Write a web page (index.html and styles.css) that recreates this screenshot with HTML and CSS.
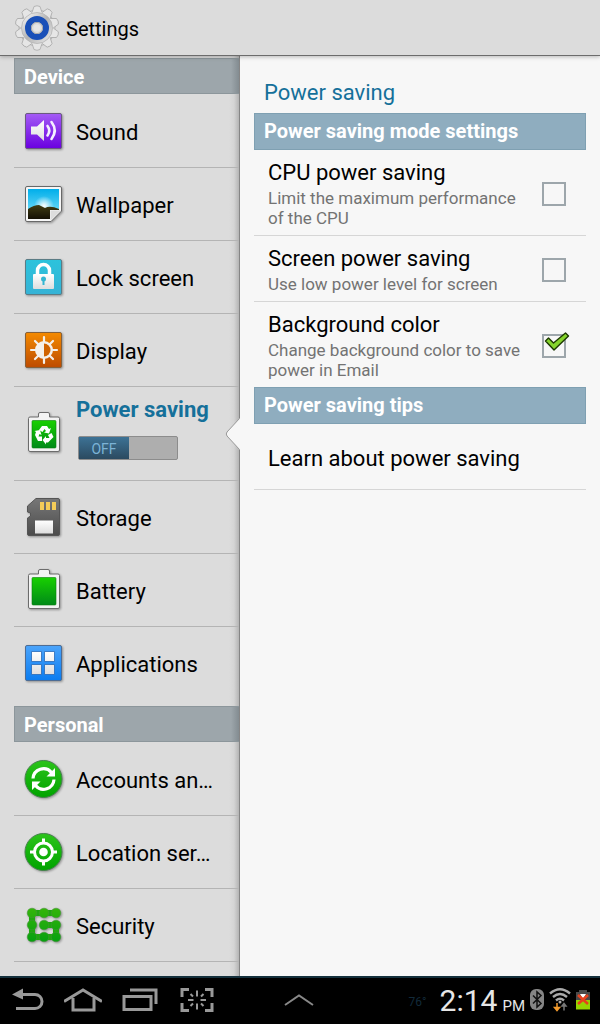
FILE: index.html
```
<!DOCTYPE html>
<html lang="en">

<head>
  <meta charset="UTF-8" />
  <meta name="viewport" content="width=device-width, initial-scale=1.0" />
  <title>Settings</title>
  <link rel="stylesheet" href="styles.css">
</head>

<body>

  <!-- shared gradients -->
  <svg class="defs" width="0" height="0" aria-hidden="true">
    <defs>
      <linearGradient id="purple" x2="0" y2="1"><stop stop-color="#a45cf5" /><stop offset="1" stop-color="#6a00e0" /></linearGradient>
      <linearGradient id="sky" x2="0" y2="1"><stop stop-color="#00aeea" /><stop offset="1" stop-color="#8be6fb" /></linearGradient>
      <linearGradient id="hill" x2="0" y2="1"><stop stop-color="#403c12" /><stop offset="1" stop-color="#151004" /></linearGradient>
      <linearGradient id="cyan" x2="0" y2="1"><stop stop-color="#2cc3dc" /><stop offset="1" stop-color="#36b3d6" /></linearGradient>
      <linearGradient id="orange" x2="0" y2="1"><stop stop-color="#f48a00" /><stop offset="1" stop-color="#bd4b00" /></linearGradient>
      <linearGradient id="blue" x2="0" y2="1"><stop stop-color="#4ba4fb" /><stop offset="1" stop-color="#0a7cf0" /></linearGradient>
      <linearGradient id="green" x2="0" y2="1"><stop stop-color="#18d000" /><stop offset="1" stop-color="#008a18" /></linearGradient>
      <linearGradient id="ball" x2="0" y2="1"><stop stop-color="#2cc41a" /><stop offset="1" stop-color="#00a300" /></linearGradient>
      <linearGradient id="dots" gradientUnits="userSpaceOnUse" x1="0" y1="3" x2="0" y2="37"><stop stop-color="#35b50a" /><stop offset="1" stop-color="#06a010" /></linearGradient>
      <linearGradient id="white" x2="0" y2="1"><stop stop-color="#fff" /><stop offset="1" stop-color="#dedede" /></linearGradient>
      <linearGradient id="card" x2="0" y2="1"><stop stop-color="#777" /><stop offset="1" stop-color="#4c4c4c" /></linearGradient>
      <linearGradient id="steel" x2="1" y2="1"><stop stop-color="#fff" /><stop offset="0.5" stop-color="#b4b4b4" /><stop offset="1" stop-color="#eee" /></linearGradient>
      <radialGradient id="sun"><stop stop-color="#fff" /><stop offset="1" stop-color="#fff" stop-opacity="0" /></radialGradient>
    </defs>
  </svg>

  <header class="title-bar">
    <svg class="gear" viewBox="0 0 46 48" aria-hidden="true">
      <g fill="#e6e6e6" stroke="#aaa" stroke-width="0.8">
        <circle cx="23" cy="24" r="18" />
        <path id="tooth" d="M18 8.500L20 2.500Q23 1 26 2.500L28 8.500" />
        <use href="#tooth" transform="rotate(36 23 24)" />
        <use href="#tooth" transform="rotate(72 23 24)" />
        <use href="#tooth" transform="rotate(108 23 24)" />
        <use href="#tooth" transform="rotate(144 23 24)" />
        <use href="#tooth" transform="rotate(180 23 24)" />
        <use href="#tooth" transform="rotate(216 23 24)" />
        <use href="#tooth" transform="rotate(252 23 24)" />
        <use href="#tooth" transform="rotate(288 23 24)" />
        <use href="#tooth" transform="rotate(324 23 24)" />
      </g>
      <circle cx="23" cy="24" r="15.500" fill="url(#steel)" stroke="#b4b4b4" stroke-width="0.8" />
      <circle cx="23" cy="24" r="9" fill="#e6e6e6" stroke="#1a50b8" stroke-width="6" />
      <circle cx="23" cy="24" r="5.600" fill="#dcdcdc" stroke="#a8a8a8" />
      <circle cx="23" cy="24" r="3.500" fill="#e6e6e6" />
    </svg>
    <h1 class="app-title">Settings</h1>
  </header>

  <div class="panes">
    <nav class="sidebar" aria-label="Settings">
      <h2 class="group">Device</h2>
      <ul class="menu">
        <li>
          <a class="item" href="#sound">
            <svg class="icon" viewBox="0 0 40 40" aria-hidden="true">
              <rect x="1.5" y="2.5" width="36" height="35" rx="1.5" fill="url(#purple)" stroke="#6b5a80" />
              <path d="M7 15.500h6l7-6.500v21l-7-6.500H7z" fill="url(#white)" />
              <path d="M23.500 15q3.500 4.500 0 9.500M27.500 11q6.500 8.500 0 17" fill="none" stroke="#f4efff" stroke-width="2.600" stroke-linecap="round" />
            </svg>
            <span class="label">Sound</span>
          </a>
        </li>
        <li>
          <a class="item" href="#wallpaper">
            <svg class="icon" viewBox="0 0 40 40" aria-hidden="true">
              <path d="M3 2.500h33q1.500 0 1.500 1.500v23L27 37.500H3q-1.500 0-1.500-1.500V4q0-1.500 1.500-1.500z" fill="#f6f6f6" stroke="#686868" />
              <path d="M4 5h31v21h-9v9H4z" fill="url(#sky)" />
              <circle cx="20" cy="22" r="10" fill="url(#sun)" />
              <path d="M4 25q6-4 11-4l6 3q5-3 14 1v1h-9v9H4z" fill="url(#hill)" />
              <path d="M26.500 36.500V26.500H37z" fill="#ddd" />
            </svg>
            <span class="label">Wallpaper</span>
          </a>
        </li>
        <li>
          <a class="item" href="#lock">
            <svg class="icon" viewBox="0 0 40 40" aria-hidden="true">
              <rect x="1.5" y="2.5" width="36" height="35" rx="1.5" fill="url(#cyan)" stroke="#5b7c85" />
              <path d="M13.500 18v-4.500a6 6 0 0 1 12 0V18" fill="none" stroke="#fff" stroke-width="3.500" />
              <rect x="9" y="17" width="21" height="15" rx="1" fill="url(#white)" />
              <circle cx="19.5" cy="22" r="2.5" fill="#35b6d2" />
              <path d="M18.500 22h2v6h-2z" fill="#35b6d2" />
            </svg>
            <span class="label">Lock screen</span>
          </a>
        </li>
        <li>
          <a class="item" href="#display">
            <svg class="icon" viewBox="0 0 40 40" aria-hidden="true">
              <rect x="1.5" y="2.5" width="36" height="35" rx="1.5" fill="url(#orange)" stroke="#85603a" />
              <path d="M20 7v26M7 20h26M11 11l18 18M29 11L11 29" stroke="#f4f0ea" stroke-width="2.200" stroke-linecap="round" />
              <circle cx="20" cy="20" r="9" fill="#f4f0ea" />
              <path d="M20 13.500a6.500 6.500 0 0 1 0 13z" fill="#d06300" />
            </svg>
            <span class="label">Display</span>
          </a>
        </li>
        <li class="item selected">
          <svg class="icon" viewBox="0 0 40 40" aria-hidden="true">
            <path d="M14.500 4V1q0-1.500 1.500-1.500h8q1.500 0 1.500 1.500v3H34q1.500 0 1.500 1.500V37q0 1.500-1.500 1.500H6q-1.500 0-1.500-1.500V5.500Q4.500 4 6 4z" fill="#f3f3f3" stroke="#6c6c6c" />
            <rect x="8" y="7.5" width="24" height="27.500" rx="1" fill="url(#green)" stroke="#08800c" stroke-width="0.600" />
            <g fill="#fff">
              <path d="M15 17l3-4h5l2 3 2-1-2 5.500-5-1 2-1.500-1.500-2-2 3z" />
              <path d="M11 22l1-3-1.500-1 5.500-1 1.500 5-2-1-1 2.500H18v4.500h-4z" />
              <path d="M24 29.500h-2v2L18.500 27l3.500-4v2h3.500L24 22l3.500-2 2 4z" />
            </g>
          </svg>
          <div class="switch-row">
            <a class="label" href="#power" aria-current="page">Power saving</a>
            <button class="switch" role="switch" aria-checked="false" aria-label="Power saving mode"><span class="thumb">OFF</span></button>
          </div>
          <svg class="notch" viewBox="0 0 15 32" aria-hidden="true">
            <path d="M15 0L2 14Q0.500 16 2 18L15 32z" fill="#f7f7f7" />
            <path d="M14.500 0.500L2 14Q0.500 16 2 18L14.500 31.500" fill="none" stroke="#999" />
          </svg>
        </li>
        <li>
          <a class="item" href="#storage">
            <svg class="icon" viewBox="0 0 40 40" aria-hidden="true">
              <path d="M12 1.500h22q1.500 0 1.500 1.500v34q0 1.500-1.500 1.500H5q-1.500 0-1.500-1.500V21l3-2v-3l-3-1v-6z" fill="url(#card)" stroke="#555" />
              <path d="M16 5h4v8h-4zM22 5h4v8h-4zM28 5h4v8h-4z" fill="#f5cc58" />
              <rect x="11" y="23.500" width="18" height="13" fill="url(#white)" />
            </svg>
            <span class="label">Storage</span>
          </a>
        </li>
        <li>
          <a class="item" href="#battery">
            <svg class="icon" viewBox="0 0 40 40" aria-hidden="true">
              <path d="M14.500 4V1q0-1.500 1.500-1.500h8q1.500 0 1.500 1.500v3H34q1.500 0 1.500 1.500V37q0 1.500-1.500 1.500H6q-1.500 0-1.500-1.500V5.500Q4.500 4 6 4z" fill="#f3f3f3" stroke="#6c6c6c" />
              <rect x="8" y="7.5" width="24" height="27.500" rx="1" fill="url(#green)" stroke="#08800c" stroke-width="0.600" />
            </svg>
            <span class="label">Battery</span>
          </a>
        </li>
        <li>
          <a class="item" href="#applications">
            <svg class="icon" viewBox="0 0 40 40" aria-hidden="true">
              <rect x="1.5" y="2.5" width="36" height="35" rx="1.5" fill="url(#blue)" stroke="#4d6c94" />
              <path d="M7.500 8.500h10v10h-10zM20.500 8.500h10v10h-10zM7.500 21.500h10v10h-10zM20.500 21.500h10v10h-10z" fill="url(#white)" stroke="#2468b8" stroke-width="0.800" />
            </svg>
            <span class="label">Applications</span>
          </a>
        </li>
      </ul>

      <h2 class="group">Personal</h2>
      <ul class="menu">
        <li>
          <a class="item" href="#accounts">
            <svg class="icon" viewBox="0 0 40 40" aria-hidden="true">
              <circle cx="19.5" cy="20" r="18.500" fill="url(#ball)" stroke="#43804a" />
              <path d="M9 19.500a10.500 10.500 0 0 1 18.500-6M30 20.500a10.500 10.500 0 0 1-18.500 6" fill="none" stroke="#fff" stroke-width="3.200" />
              <path d="M31 9v8.500h-8.500zM8 31v-8.500h8.500z" fill="#fff" />
            </svg>
            <span class="label">Accounts an…</span>
          </a>
        </li>
        <li>
          <a class="item" href="#location">
            <svg class="icon" viewBox="0 0 40 40" aria-hidden="true">
              <circle cx="19.5" cy="20" r="18.500" fill="url(#ball)" stroke="#43804a" />
              <circle cx="19.5" cy="20" r="9" fill="none" stroke="#fff" stroke-width="3" />
              <circle cx="19.5" cy="20" r="4.300" fill="#fff" />
              <path d="M19.500 6.500v5M19.500 28.500v5M6 20h5M28 20h5" stroke="#fff" stroke-width="3" />
            </svg>
            <span class="label">Location ser…</span>
          </a>
        </li>
        <li>
          <a class="item" href="#security">
            <svg class="icon" viewBox="0 0 40 40" aria-hidden="true">
              <path d="M32 8H8v24h24V20H20" fill="none" stroke="#1fa80e" stroke-width="6" />
              <g fill="url(#dots)" stroke="#4a9040" stroke-width="0.500">
                <circle cx="8" cy="8" r="4.800" /><circle cx="20" cy="8" r="4.800" /><circle cx="32" cy="8" r="4.800" />
                <circle cx="8" cy="20" r="4.800" /><circle cx="20" cy="20" r="4.800" /><circle cx="32" cy="20" r="4.800" />
                <circle cx="8" cy="32" r="4.800" /><circle cx="20" cy="32" r="4.800" /><circle cx="32" cy="32" r="4.800" />
              </g>
            </svg>
            <span class="label">Security</span>
          </a>
        </li>
      </ul>
    </nav>

    <main class="detail">
      <h2 class="detail-title">Power saving</h2>

      <h3 class="section">Power saving mode settings</h3>
      <label class="option" for="cpu">
        <span class="option-text">
          <span class="option-name">CPU power saving</span>
          <span class="option-info">Limit the maximum performance of the CPU</span>
        </span>
        <input class="check" type="checkbox" id="cpu">
      </label>
      <label class="option" for="screen">
        <span class="option-text">
          <span class="option-name">Screen power saving</span>
          <span class="option-info">Use low power level for screen</span>
        </span>
        <input class="check" type="checkbox" id="screen">
      </label>
      <label class="option" for="background">
        <span class="option-text">
          <span class="option-name">Background color</span>
          <span class="option-info">Change background color to save power in Email</span>
        </span>
        <span class="check-wrap">
          <input class="check" type="checkbox" id="background" checked>
          <svg class="tick" viewBox="0 0 26 20" aria-hidden="true">
            <path d="M1.500 9L4.500 6L9.500 11L21.500 1L24.500 4L10 18z" fill="#85d42c" stroke="#1c3800" stroke-width="1.400" stroke-linejoin="round" />
          </svg>
        </span>
      </label>

      <h3 class="section">Power saving tips</h3>
      <a class="option tips" href="#learn">Learn about power saving</a>
    </main>
  </div>

  <footer class="system-bar">
    <button class="key" aria-label="Back">
      <svg width="32" height="24" viewBox="0 0 32 24" fill="none" stroke="#999" stroke-width="3">
        <path d="M8 6.500h15a7 7 0 0 1 0 14H4" /><path d="M0 6.500L11 0.500v11z" fill="#999" stroke="none" />
      </svg>
    </button>
    <button class="key" aria-label="Home">
      <svg width="38" height="24" viewBox="0 0 38 24" fill="none" stroke="#999" stroke-width="3">
        <path d="M0 13.500L19 2l19 11.500" /><path d="M9 10v12h21V10" />
      </svg>
    </button>
    <button class="key" aria-label="Recent apps">
      <svg width="36" height="24" viewBox="0 0 36 24" fill="none" stroke="#999" stroke-width="3">
        <path d="M2 8.500h27v13H2z" /><path d="M8 2h26v14" />
      </svg>
    </button>
    <button class="key" aria-label="Screen capture">
      <svg width="36" height="24" viewBox="0 0 36 24" fill="none" stroke="#999" stroke-width="3">
        <path d="M4 9V1.500h7M27 1.500h7V9M4 15v7.500h7M27 22.500h7V15" />
        <path d="M19 2.500v6M19 15.500v6M10 12h5.500M22.500 12H28M12.500 6l2.500 2.500M25.500 6L23 8.500M12.500 18l2.500-2.500M25.500 18L23 15.500" stroke-width="2" />
      </svg>
    </button>
    <button class="key tray" aria-label="Mini apps">
      <svg width="30" height="12" viewBox="0 0 30 12" fill="none" stroke="#888" stroke-width="2">
        <path d="M1 11L15 1.500L29 11" />
      </svg>
    </button>
    <div class="status">
      <span class="temperature">76°</span>
      <span class="clock">2:14</span>
      <span class="meridiem">PM</span>
      <svg width="14" height="22" viewBox="0 0 14 22" aria-label="Bluetooth">
        <rect width="14" height="21" rx="6" fill="#858585" />
        <path d="M3 6.500l8 8-4 3.500V3l4 3.500-8 8" fill="none" stroke="#111" stroke-width="1.500" />
      </svg>
      <svg width="22" height="24" viewBox="0 0 22 24" aria-label="Wi-Fi">
        <path d="M1 5.500Q11-3 21 5.500M4 9Q11 3 18 9M7 12.500q4-3.500 8 0" fill="none" stroke="#aaa" stroke-width="2.400" />
        <circle cx="11" cy="14" r="1.500" fill="#aaa" />
        <path d="M8 15v6M5.500 19.500L8 22.500l2.500-3z" stroke="#f39b2d" stroke-width="1.500" fill="#f39b2d" />
        <path d="M15 22.500v-6M13 18l2-2.500 2 2.500z" stroke="#777" stroke-width="1.500" fill="#777" />
      </svg>
      <svg width="14" height="20" viewBox="0 0 14 20" aria-label="Battery">
        <path d="M3 0h8v2h3v8H0V2h3z" fill="#4a4a4a" />
        <path d="M0 10h14v9.500H0z" fill="#94d500" />
        <path d="M4 4h6l-3 5z" fill="#fff" />
        <path d="M2 5l10 9M12 5L2 14" stroke="#e8401c" stroke-width="2.600" />
      </svg>
    </div>
  </footer>

</body>

</html>
```
FILE: styles.css
```
* {
  box-sizing: border-box;
}

body {
  margin: 0;
  min-height: 100vh;
  display: flex;
  flex-direction: column;
  font-family: Roboto, "Liberation Sans", sans-serif;
  color: #000;
  background-color: #f7f7f7;
}

h1, h2, h3, ul {
  margin: 0;
  padding: 0;
  font-weight: normal;
}

a {
  color: inherit;
  text-decoration: none;
}

button {
  border: none;
  padding: 0;
  font-family: inherit;
  cursor: pointer;
}

.defs {
  position: absolute;
}

.title-bar {
  display: flex;
  align-items: center;
  gap: 6px;
  height: 56px;
  padding: 1px 0 0 14px;
  background-color: #dcdcdc;
  border-bottom: 1px solid #6c6c6c;
  box-shadow: 0 1px 4px rgba(0, 0, 0, 0.25);
  z-index: 1;
}

.gear {
  width: 46px;
  height: 48px;
}

.app-title {
  padding-top: 1px;
  font-size: 20px;
  line-height: 28px;
}

.panes {
  flex: 1;
  display: grid;
  grid-template-columns: 2fr 3fr;
}

.sidebar {
  padding: 2px 0 0 14px;
  background: linear-gradient(to left, #b4b4b4, #d4d4d4 5px, #dcdcdc 10px) #dcdcdc;
  border-right: 1px solid #858585;
  min-width: 0;
}

.group {
  height: 36px;
  margin-bottom: 1px;
  padding-left: 9px;
  border: 1px solid #8c969b;
  border-right: none;
  background: linear-gradient(to left, #838c91, #9da6ab 8px);
  color: #fff;
  font-size: 20px;
  font-weight: bold;
  line-height: 36px;
}

.menu + .group {
  margin-top: 6px;
}

.menu {
  list-style: none;
}

.item {
  position: relative;
  display: flex;
  align-items: center;
  gap: 12px;
  height: 73px;
  padding: 0 20px 1px 10px;
  border-bottom: 1px solid #b4b4b4;
}

.menu:first-of-type li:last-child .item {
  border-bottom-color: transparent;
}

.icon {
  flex: none;
  width: 40px;
  height: 40px;
  overflow: visible;
  filter: drop-shadow(1px 1px 1px rgba(0, 0, 0, 0.35));
}

.label {
  padding-top: 4px;
  font-size: 22px;
  line-height: 28px;
  white-space: nowrap;
}

.selected {
  height: 94px;
}

.selected .label {
  color: #15709a;
  font-weight: bold;
}

.switch-row {
  display: flex;
  flex-direction: column;
  gap: 12px;
  padding-bottom: 14px;
}

.switch {
  width: 100px;
  height: 24px;
  margin-left: 2px;
  border: 1px solid #8c8c8c;
  border-radius: 2px;
  background-color: #aeaeae;
  text-align: left;
}

.thumb {
  display: block;
  width: 50px;
  height: 22px;
  background: linear-gradient(#3d7295, #2b4a60);
  color: #7cb3d6;
  font-size: 14px;
  line-height: 24px;
  text-align: center;
}

.notch {
  position: absolute;
  right: -1px;
  top: 31px;
  width: 15px;
  height: 32px;
}

.detail {
  padding: 23px 14px 0;
  min-width: 0;
}

.detail-title {
  margin-bottom: 6px;
  padding-left: 10px;
  color: #15709a;
  font-size: 22px;
  line-height: 28px;
}

.section {
  padding-left: 9px;
  border: 1px solid #7fa0b2;
  background-color: #8fadbf;
  color: #fff;
  font-size: 20px;
  font-weight: bold;
  line-height: 35px;
}

.option {
  display: flex;
  align-items: center;
  justify-content: space-between;
  gap: 12px;
  padding: 9px 20px 7px 14px;
  border-bottom: 1px solid #d6d6d6;
}

.option:has(+ .section) {
  border-bottom: none;
}

.option-text {
  display: flex;
  flex-direction: column;
  gap: 1px;
}

.option-name,
.tips {
  font-size: 22px;
  line-height: 28px;
}

.option-info {
  color: #737373;
  font-size: 17px;
  line-height: 20px;
}

.tips {
  padding-top: 21px;
  padding-bottom: 16px;
}

.check {
  flex: none;
  display: block;
  appearance: none;
  width: 24px;
  height: 24px;
  margin: 0;
  border: 2px solid #9da6ab;
}

.check-wrap {
  position: relative;
}

.tick {
  position: absolute;
  left: 2px;
  top: -2px;
  width: 26px;
  height: 20px;
}

.check:not(:checked) + .tick {
  display: none;
}

.system-bar {
  display: flex;
  align-items: center;
  height: 48px;
  padding: 0 10px 2px 12px;
  border-top: 2px solid #14303c;
  background-color: #000;
}

.key {
  display: flex;
  margin-right: 20px;
  background: none;
}

.tray {
  margin-left: 50px;
}

.status {
  display: flex;
  align-items: center;
  gap: 5px;
  margin-left: auto;
  color: #e6e6e6;
}

.temperature {
  padding-top: 4px;
  margin-right: 8px;
  color: #122a3a;
  font-size: 12px;
}

.clock {
  padding-top: 2px;
  font-size: 30px;
  line-height: 36px;
}

.meridiem {
  padding-top: 12px;
  font-size: 15px;
  line-height: 20px;
}
```
